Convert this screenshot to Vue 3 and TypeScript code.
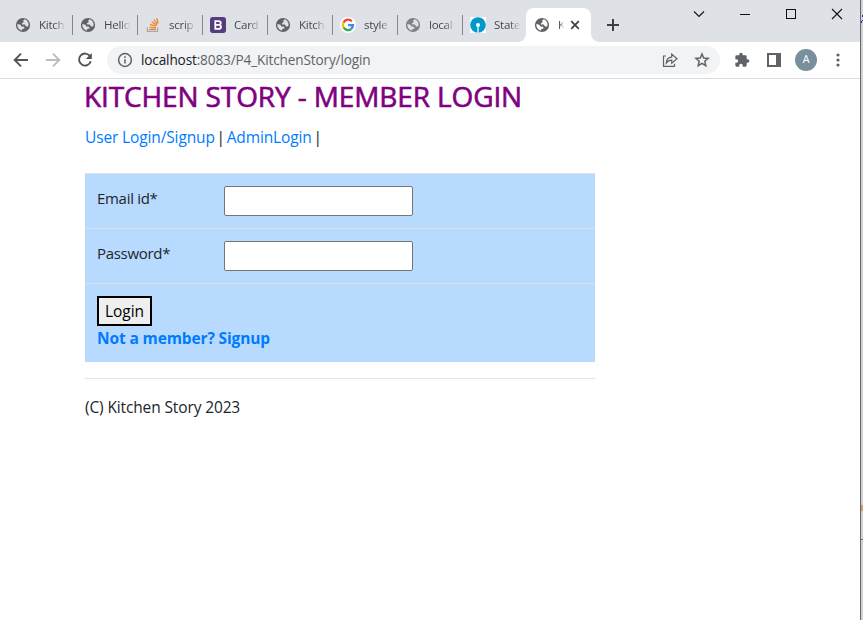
<script setup lang="ts">
type IconName = 'globe' | 'stack' | 'bootstrap' | 'google' | 'bank'

interface Tab {
  title: string
  icon: IconName
  active?: boolean
  muted?: boolean
  separated?: boolean
}

const tabs: Tab[] = [
  { title: 'Kitch', icon: 'globe', separated: true },
  { title: 'Hello', icon: 'globe', separated: true },
  { title: 'scrip', icon: 'stack', separated: true },
  { title: 'Card', icon: 'bootstrap', separated: true },
  { title: 'Kitch', icon: 'globe', separated: true },
  { title: 'style', icon: 'google', separated: true },
  { title: 'local', icon: 'globe', muted: true, separated: true },
  { title: 'State', icon: 'bank' },
  { title: 'K', icon: 'globe', active: true },
]

const fields = [
  { label: 'Email id*', name: 'email', type: 'text' },
  { label: 'Password*', name: 'password', type: 'password' },
]
</script>

<template>
  <div class="screen">
    <div class="browser">
      <header class="tabstrip">
        <div class="tabs">
          <div v-for="(tab, i) in tabs" :key="i" class="tab" :class="{ active: tab.active, separated: tab.separated }">
            <svg v-if="tab.icon === 'globe'" class="favicon" :class="{ muted: tab.muted }" viewBox="0 0 16 16">
              <circle cx="8" cy="8" r="7.1" fill="currentColor" />
              <path class="land" d="M9.6 2.2 8.2 3.7 8.6 5.2 6.9 6.2 7.1 7.6 9.8 7.5 11 9.4 12.7 9.5 13.6 8.4C13.8 5.2 12.1 2.9 9.6 2.2ZM2.4 7.1C2 10.3 4 13.1 7.1 13.6L7.2 12.1 9.5 11.5 9.2 9.8 6.5 9.5 5.4 7.7Z" />
            </svg>
            <svg v-else-if="tab.icon === 'stack'" class="favicon" viewBox="0 0 16 16" fill="none">
              <path d="M2.4 10.6V14.3H12.6V10.6" stroke="#a7a9ac" stroke-width="1.3" />
              <path d="M4.3 12.3H10.8M4.5 10 10.9 10.8M5.2 7.4 11.2 9.1M6.6 4.7 11.9 8M8.8 2.7 12.6 7.1M11.7 1.2 13.1 6.2" stroke="#f48024" stroke-width="1.25" />
            </svg>
            <svg v-else-if="tab.icon === 'bootstrap'" class="favicon" viewBox="0 0 16 16">
              <rect width="16" height="16" rx="2.7" fill="#563d7c" />
              <path d="M5.3 4.1H8.6C11.5 4.1 11.3 7.6 9 7.8 11.9 8 11.6 11.9 8.7 11.9H5.3Z M5.4 7.8H9" fill="none" stroke="#fff" stroke-width="1.8" />
            </svg>
            <svg v-else-if="tab.icon === 'google'" class="favicon" viewBox="0 0 16 16">
              <circle cx="8" cy="8" r="8" fill="#fff" />
              <g fill="none" stroke-width="2.3">
                <path d="M3.6 5.5A5 5 0 0 1 11.8 4.3" stroke="#ea4335" />
                <path d="M3.6 5.4A5.1 5.1 0 0 0 3.6 10.6" stroke="#fbbc05" />
                <path d="M3.6 10.5A5 5 0 0 0 11.3 11.8" stroke="#34a853" />
                <path d="M8.1 8.1H13A5 5 0 0 1 11.2 11.9" stroke="#4285f4" />
              </g>
            </svg>
            <svg v-else class="favicon" viewBox="0 0 16 16">
              <rect width="16" height="16" fill="#fff" />
              <circle cx="8" cy="8" r="7.8" fill="#0099cc" />
              <circle cx="8" cy="8" r="2" fill="#fff" />
              <path d="M7.4 9H8.6V16H7.4Z" fill="#fff" />
            </svg>
            <span class="tab-title">{{ tab.title }}</span>
            <svg v-if="tab.active" class="tab-close" viewBox="0 0 10 10"><path d="M1.2 1.2 8.8 8.8M8.8 1.2 1.2 8.8" /></svg>
          </div>
        </div>
        <svg class="new-tab" viewBox="0 0 12 12"><path d="M6 0V12M0 6H12" /></svg>
        <div class="window-controls">
          <svg viewBox="0 0 12 12"><path d="M1 3.5 6 8.5 11 3.5" /></svg>
          <svg viewBox="0 0 12 12" shape-rendering="crispEdges"><path d="M1 6.5H11" /></svg>
          <svg viewBox="0 0 12 12" shape-rendering="crispEdges"><path d="M1.5 1.5H10.5V10.5H1.5Z" /></svg>
          <svg viewBox="0 0 12 12"><path d="M1 1 11 11M11 1 1 11" /></svg>
        </div>
      </header>

      <nav class="toolbar">
        <svg class="nav-icon" viewBox="0 0 16 16"><path d="M15 8H2M8 1.7 1.7 8 8 14.3" /></svg>
        <svg class="nav-icon disabled" viewBox="0 0 16 16"><path d="M1 8H14M8 1.7 14.3 8 8 14.3" /></svg>
        <svg class="nav-icon" viewBox="0 0 16 16">
          <path d="M13.1 4.3A6 6 0 1 0 13.8 9.3" />
          <path d="M14.8 1V7H8.8Z" fill="currentColor" stroke="none" />
        </svg>
        <div class="omnibox">
          <svg class="info" viewBox="0 0 16 16">
            <circle cx="8" cy="8" r="6.4" />
            <path d="M8 7.2V11.6M8 4.3V6" />
          </svg>
          <span class="url"><b>localhost</b>:8083/P4_KitchenStory/login</span>
          <svg class="share" viewBox="0 0 16 16">
            <path d="M4 4H1.5V14.3H12.5V11.7" />
            <path d="M4.2 11.2C4.4 7.5 6.4 5.3 9.7 5.1V2L15 6.7 9.7 11.2V8.2C7.2 8.2 5.5 9.3 4.2 11.2Z" />
          </svg>
          <svg class="star" viewBox="0 0 16 16">
            <path d="M8 2 9.7 6 14.1 6.4 10.8 9.3 11.8 13.6 8 11.3 4.2 13.6 5.2 9.3 1.9 6.4 6.3 6Z" />
          </svg>
        </div>
        <svg class="puzzle" viewBox="0 0 24 24">
          <path d="M20.5 11H19V7a2 2 0 0 0-2-2h-4V3.5a2.5 2.5 0 0 0-5 0V5H4a2 2 0 0 0-2 2v3.8h1.5a2.7 2.7 0 0 1 0 5.4H2V20a2 2 0 0 0 2 2h3.8v-1.5a2.7 2.7 0 0 1 5.4 0V22H17a2 2 0 0 0 2-2v-4h1.5a2.5 2.5 0 0 0 0-5Z" />
        </svg>
        <svg class="panel" viewBox="0 0 14 14"><path fill-rule="evenodd" d="M0 0H14V14H0ZM2 2V12H9V2Z" /></svg>
        <span class="avatar">A</span>
        <svg class="menu" viewBox="0 0 4 14"><circle cx="2" cy="2" r="1.6" /><circle cx="2" cy="7" r="1.6" /><circle cx="2" cy="12" r="1.6" /></svg>
      </nav>

      <main class="page">
        <h1>KITCHEN STORY - MEMBER LOGIN</h1>
        <p class="links"><a>User Login/Signup</a> <span class="bar">|</span> <a>AdminLogin</a> <span class="bar">|</span></p>
        <form class="login" @submit.prevent>
          <div v-for="field in fields" :key="field.name" class="row">
            <label :for="field.name">{{ field.label }}</label>
            <input :id="field.name" :type="field.type" :name="field.name" />
          </div>
          <div class="row actions">
            <button type="submit">Login</button>
            <a class="signup">Not a member? Signup</a>
          </div>
        </form>
        <footer><span>(C) Kitchen Story 2023</span></footer>
      </main>
    </div>
    <aside class="behind">
      <svg class="scribble" viewBox="0 0 2 8" shape-rendering="crispEdges"><path d="M1 0H2V2H1ZM1 5H2V6H1ZM0 6H1V8H0Z" /></svg>
      <span class="glimpse"></span>
      <span class="panel-edge"></span>
    </aside>
  </div>
</template>

<style>
body {
  overflow: hidden;
  background: #fff;
}
</style>

<style scoped>
* {
  box-sizing: border-box;
}
svg {
  display: block;
  flex: none;
}
.screen {
  display: flex;
  width: 863px;
  height: 620px;
  font-family: "Open Sans", "Noto Sans", sans-serif;
}
.browser {
  width: 860px;
  background: #fff;
}
.tabstrip {
  display: flex;
  height: 42px;
  padding: 8px 9px 0 6px;
  background: #dee1e6;
}
.tabs {
  display: flex;
}
.tab {
  position: relative;
  display: flex;
  align-items: center;
  width: 65px;
  height: 34px;
  padding-left: 9px;
  color: #5f6368;
}
.tab.separated::after {
  content: "";
  position: absolute;
  right: -2px;
  top: 7px;
  width: 1px;
  height: 20px;
  background: #85888d;
}
.favicon {
  width: 16px;
  height: 16px;
}
.favicon.muted {
  color: #808080;
}
.land {
  fill: #dee1e6;
}
.tab.active .land {
  fill: #fff;
}
.tab-title {
  width: 28px;
  margin-left: 8px;
  white-space: nowrap;
  font-size: 11.5px;
  line-height: 18px;
  letter-spacing: -0.25px;
  color: #45494d;
  mask-image: linear-gradient(90deg, #000 55%, transparent 96%);
}
.tab.active {
  padding-left: 8px;
  background: #fff;
  border-radius: 8px 8px 0 0;
}
.tab.active::before,
.tab.active::after {
  content: "";
  position: absolute;
  bottom: 0;
  width: 8px;
  height: 8px;
}
.tab.active::before {
  left: -8px;
  background: radial-gradient(circle at 0 0, transparent 7.5px, #fff 8px);
}
.tab.active::after {
  right: -8px;
  background: radial-gradient(circle at 100% 0, transparent 7.5px, #fff 8px);
}
.tab.active .tab-title {
  width: 6px;
  mask-image: linear-gradient(90deg, #000 30%, transparent);
}
.tab-close {
  width: 10px;
  height: 10px;
  margin-left: 6px;
  stroke: #3c4043;
  stroke-width: 1.7;
}
.new-tab {
  width: 12px;
  height: 12px;
  margin: 11px 0 0 16px;
  stroke: #3c4043;
  stroke-width: 2;
}
.window-controls {
  display: flex;
  gap: 34px;
  margin-left: auto;
  padding-right: 8px;
}
.window-controls svg {
  width: 12px;
  height: 12px;
  fill: none;
  stroke: #111;
  stroke-width: 1.1;
}
.toolbar {
  display: flex;
  align-items: center;
  height: 37px;
  padding: 0 0 1px 13px;
  border-bottom: 1px solid #dadce0;
}
.nav-icon {
  width: 16px;
  height: 16px;
  margin-right: 16px;
  fill: none;
  stroke: currentColor;
  stroke-width: 1.9;
  color: #505358;
}
.nav-icon.disabled {
  color: #babcbe;
}
.omnibox {
  display: flex;
  align-items: center;
  width: 613px;
  height: 28px;
  margin-left: -2px;
  padding: 0 10px;
  border-radius: 14px;
  background: #f1f3f4;
}
.info {
  width: 16px;
  height: 16px;
  fill: none;
  stroke: #5f6368;
  stroke-width: 1.5;
}
.url {
  margin-left: 8px;
  font-size: 13.6px;
  line-height: 20px;
  letter-spacing: -0.14px;
  color: #5f6368;
}
.url b {
  font-weight: 400;
  color: #202124;
}
.share,
.star {
  width: 16px;
  height: 16px;
  fill: none;
  stroke: #5f6368;
  stroke-width: 1.2;
}
.share {
  margin-left: auto;
}
.star {
  margin-left: 16px;
  stroke-width: 1.5;
}
.puzzle {
  width: 16px;
  height: 16px;
  margin-left: 14px;
  fill: #5f6368;
}
.panel {
  width: 14px;
  height: 14px;
  margin-left: 17px;
  fill: #5f6368;
}
.avatar {
  width: 22px;
  height: 22px;
  margin-left: 14px;
  border-radius: 50%;
  background: #78909c;
  color: #fff;
  font: 11px/22px Roboto, sans-serif;
  text-align: center;
}
.menu {
  width: 4px;
  height: 14px;
  margin-left: 19px;
  fill: #5f6368;
}
.page {
  width: 510px;
  margin-left: 85px;
  font-size: 15.5px;
  line-height: 24px;
  letter-spacing: -0.13px;
  color: #212529;
}
h1 {
  margin: 0 0 0 -1px;
  font-size: 28px;
  font-weight: 500;
  line-height: 34px;
  letter-spacing: -0.12px;
  white-space: nowrap;
  color: #800080;
  -webkit-text-stroke: 0.6px #800080;
}
.links {
  margin: 12px 0 24px;
}
.bar {
  margin: 0 -2.2px;
}
a {
  color: #007bff;
}
.login {
  background: #b8daff;
}
.row {
  display: flex;
  height: 55px;
  padding: 12px;
  border-top: 1px solid #dee2e6;
}
label {
  width: 127px;
  font-size: 15px;
  letter-spacing: -0.3px;
}
input {
  width: 189px;
  height: 30px;
  border: 1px solid #767676;
  border-radius: 2px;
  background: #fff;
}
.row.actions {
  flex-direction: column;
  align-items: flex-start;
  height: 79px;
}
button {
  width: 55px;
  height: 30px;
  padding: 0;
  border: 2px solid #000;
  background: #efefef;
  font: inherit;
  color: #000;
}
.signup {
  font-weight: 700;
}
footer {
  margin-top: 16px;
  padding-top: 16px;
  border-top: 1px solid #e5e5e5;
}
.behind {
  position: relative;
  width: 3px;
  border-left: 1px solid #66686b;
  background: #d2d2d2;
}
.scribble {
  position: absolute;
  top: 15px;
  left: 0;
  width: 2px;
  height: 8px;
  fill: #3a1fd0;
}
.glimpse {
  position: absolute;
  top: 505px;
  width: 2px;
  height: 6px;
  background: #c9a06a;
}
.panel-edge {
  position: absolute;
  top: 539px;
  width: 2px;
  height: 1px;
  background: #777;
}
</style>
